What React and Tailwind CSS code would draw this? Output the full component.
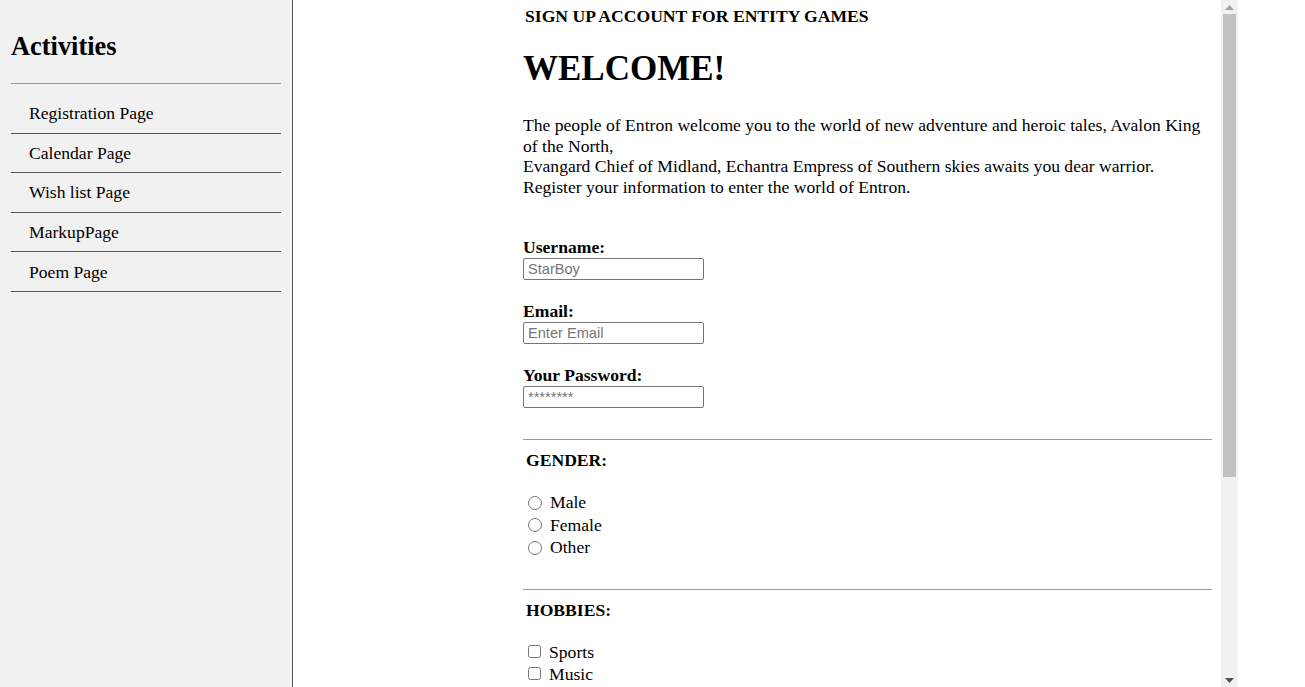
import React from 'react';

const navItems = ['Registration Page', 'Calendar Page', 'Wish list Page', 'MarkupPage', 'Poem Page'];

const fields = [
  { label: 'Username:', placeholder: 'StarBoy', type: 'text' },
  { label: 'Email:', placeholder: 'Enter Email', type: 'email' },
  { label: 'Your Password:', placeholder: '********', type: 'password' },
];

// classic scrollbar look (the native one is hidden in headless)
const ScrollBar = () => (
  <div className="w-[17px] shrink-0 h-full bg-[#f1f1f1] flex flex-col items-center">
    <div className="h-[14px] w-full flex items-center justify-center">
      <svg width="9" height="5" viewBox="0 0 9 5"><path d="M4.5 0 L9 5 L0 5 Z" fill="#a3a3a3" /></svg>
    </div>
    <div className="w-[13px] h-[463px] bg-[#c1c1c1]" />
    <div className="flex-1" />
    <div className="h-[14px] w-full flex items-center justify-center">
      <svg width="9" height="5" viewBox="0 0 9 5"><path d="M0 0 L9 0 L4.5 5 Z" fill="#505050" /></svg>
    </div>
  </div>
);

const App = () => {
  return (
    <div className="flex h-screen overflow-hidden bg-white text-black font-['Liberation_Serif','Times_New_Roman',serif] text-[17.6px]">
      {/* Sidebar */}
      <aside className="w-[293px] shrink-0 h-full bg-[#f1f1f1] border-r border-[#555] px-[11px]">
        <h2 className="text-[26.4px] font-bold leading-[30px] pt-[31px] pb-[22px]">Activities</h2>
        <ul className="border-t border-[#999] pt-[10px] w-[270px]">
          {navItems.map(item => (
            <li key={item} className="border-b border-[#555] pl-[18px] h-[39.6px] flex items-center leading-[20px]">
              {item}
            </li>
          ))}
        </ul>
      </aside>

      {/* Main */}
      <main className="flex-1 h-full">
        <div className="ml-[224px] w-[721px] h-full flex">
          <div className="flex-1 h-full overflow-y-auto [scrollbar-width:none] pl-[6px] pr-[9px]">
            <h4 className="font-bold text-[17.6px] leading-[20px] pt-[6px] pl-[2px]">SIGN UP ACCOUNT FOR ENTITY GAMES</h4>
            <h1 className="font-bold text-[35px] leading-[40px] mt-[23px]">WELCOME!</h1>
            <p className="leading-[20.6px] mt-[26px]">
              The people of Entron welcome you to the world of new adventure and heroic tales, Avalon King<br />
              of the North,<br />
              Evangard Chief of Midland, Echantra Empress of Southern skies awaits you dear warrior.<br />
              Register your information to enter the world of Entron.
            </p>

            <form className="mt-[40px]">
              {fields.map((f, i) => (
                <div key={f.label} className={i === 0 ? '' : 'mt-[21px]'}>
                  <label className="block font-bold leading-[20px]">{f.label}</label>
                  <input
                    type={f.type}
                    placeholder={f.placeholder}
                    className="block w-[181px] h-[22px] mt-[1px] border border-[#767676] rounded-[2px] px-[4px] text-[14.6px] font-['Liberation_Sans',Arial,sans-serif] placeholder:text-[#757575]"
                  />
                </div>
              ))}

              <hr className="mt-[31px] border-t border-[#9a9a9a]" />
              <h4 className="font-bold leading-[20px] mt-[10px] pl-[3px]">GENDER:</h4>
              <div className="mt-[21px] pl-[5px]">
                {['Male', 'Female', 'Other'].map(g => (
                  <label key={g} className="flex items-center h-[22.5px] gap-[8px]">
                    <input type="radio" name="gender" className="w-[14px] h-[14px] m-0" />
                    <span>{g}</span>
                  </label>
                ))}
              </div>

              <hr className="mt-[30px] border-t border-[#9a9a9a]" />
              <h4 className="font-bold leading-[20px] mt-[10px] pl-[3px]">HOBBIES:</h4>
              <div className="mt-[21px] pl-[5px]">
                {['Sports', 'Music', 'Reading', 'Gaming'].map(h => (
                  <label key={h} className="flex items-center h-[22px] gap-[8px]">
                    <input type="checkbox" className="w-[13px] h-[13px] m-0" />
                    <span>{h}</span>
                  </label>
                ))}
              </div>

              <hr className="mt-[30px] border-t border-[#9a9a9a]" />
              <div className="mt-[20px] pb-[80px]">
                <button type="submit" className="border border-[#767676] bg-[#efefef] rounded-[2px] px-[8px] py-[2px] text-[14.6px] font-['Liberation_Sans',Arial,sans-serif]">
                  Submit
                </button>
              </div>
            </form>
          </div>
          <ScrollBar />
        </div>
      </main>
    </div>
  );
};

export default App;
